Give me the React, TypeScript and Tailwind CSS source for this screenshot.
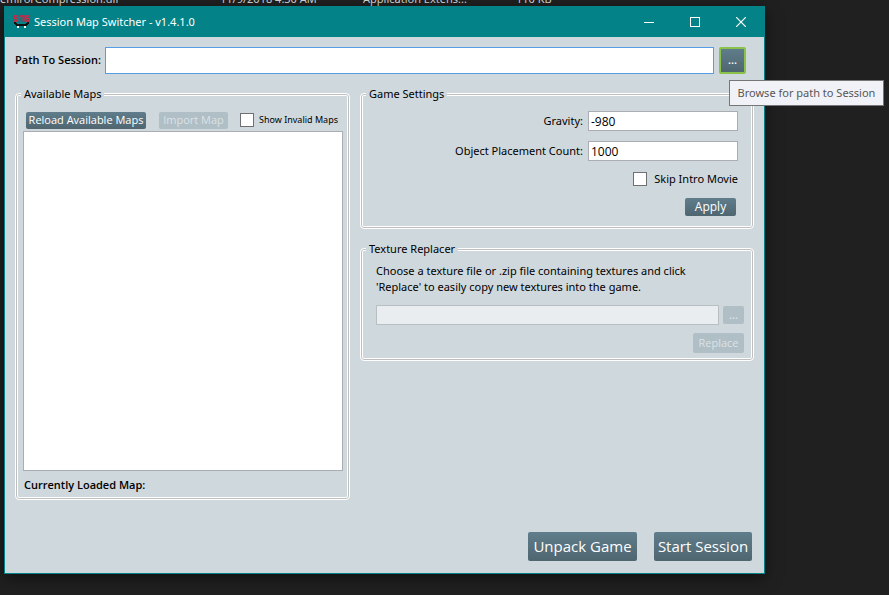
import type { ReactNode } from "react";

const BODY = "font-['Noto_Sans','Segoe_UI',sans-serif]";
const STRONG = "font-['Open_Sans','Segoe_UI',sans-serif] font-semibold";
const BUTTON =
  "shrink-0 rounded-xs bg-linear-to-b from-[#607d8b] to-[#4f6670] font-['Open_Sans','Segoe_UI',sans-serif] text-white whitespace-nowrap disabled:bg-none disabled:bg-[#b0bec5] disabled:text-[#dbe2e6]";
const FIELD = "min-w-0 border border-[#abadb3] bg-white px-[2px] font-['Open_Sans','Segoe_UI',sans-serif] text-[12px] text-black outline-none";
const CHECK = "m-0 h-[14px] w-[14px] shrink-0 appearance-none border border-[#707070] bg-white";

function GroupBox({ title, className, children }: { title: string; className: string; children: ReactNode }) {
  return (
    <fieldset
      className={
        "flex min-w-0 flex-col rounded-[4px] border border-white shadow-[inset_0_0_0_1px_#bfbfbf,inset_0_0_0_2px_#ffffff] " +
        className
      }
    >
      <legend className="float-left -mt-[8px] ml-[5px] h-[16px] self-start bg-[#cfd8dd] px-[3px] leading-[16px]">
        {title}
      </legend>
      {children}
    </fieldset>
  );
}

function Logo() {
  return (
    <svg width="18" height="14" viewBox="0 0 18 14" aria-hidden="true">
      <g fill="none" stroke="#dc1f3f" strokeWidth="1.400">
        <path d="M5 1H1V3.500H4.300V6H.3" />
        <path d="M6.500 6.700V1H11V6.700M8.750 1V6.700" />
        <path d="M16.500 1H12.700V3.500H16V6H12" />
      </g>
      <path d="M1 7h2v1h1v1h9V8h1V7h2v2h-1v1h-1v1H3v-1H2V9H1z" fill="#101010" />
      <path d="M4 11h2v2H4zM11 11h2v2h-2z" fill="#fff" />
    </svg>
  );
}

export default function App() {
  return (
    <div className={"relative flex min-h-screen overflow-hidden bg-[#202020] pt-[6px] pr-[124px] pb-[21px] pl-[4px] text-[11px] text-black " + BODY}>
      <div className="absolute -top-[9px] left-0 flex h-[16px] leading-[16px] whitespace-nowrap text-[#d8d8d8]">
        <span className="w-[220px]">emirorCompression.dll</span>
        <span className="w-[143px]">11/9/2018 4:30 AM</span>
        <span className="w-[153px]">Application Extens...</span>
        <span>110 KB</span>
      </div>

      <main className="relative flex min-w-0 flex-1 flex-col border border-[#038387] bg-[#cfd8dd] shadow-[0_4px_14px_rgba(0,0,0,0.5)]">
        <header className="flex h-[30px] shrink-0 items-center bg-[#038387] pl-[8px] text-white">
          <Logo />
          <h1 className="ml-[3px] flex-1">Session Map Switcher - v1.4.1.0</h1>
          <button type="button" aria-label="Minimize" className="flex h-[30px] w-[46px] items-center justify-center">
            <svg width="10" height="10" stroke="#fff" shapeRendering="crispEdges">
              <path d="M0 5.500H10" />
            </svg>
          </button>
          <button type="button" aria-label="Maximize" className="flex h-[30px] w-[46px] items-center justify-center">
            <svg width="10" height="10" stroke="#fff" fill="none" shapeRendering="crispEdges">
              <path d="M.5.5h9v9h-9z" />
            </svg>
          </button>
          <button type="button" aria-label="Close" className="flex h-[30px] w-[46px] items-center justify-center">
            <svg width="10" height="10" stroke="#fff" strokeWidth="1.200">
              <path d="M0 0L10 10M10 0L0 10" />
            </svg>
          </button>
        </header>

        <div className="flex flex-1 flex-col px-[10px] pt-[10px] pb-[12px]">
          <div className="flex items-center pr-[8px]">
            <label htmlFor="path" className={"w-[90px] shrink-0 whitespace-nowrap " + STRONG}>
              Path To Session:
            </label>
            <input id="path" type="text" className="h-[27px] min-w-0 flex-1 border border-[#569de5] bg-white px-[3px] outline-none" />
            <button type="button" aria-describedby="tip" className={BUTTON + " ml-[5px] h-[27px] w-[27px] rounded-[3px] border-2 border-[#8bc34a] font-semibold"}>
              ...
            </button>
          </div>

          <div className="mt-[19px] flex flex-1 gap-[10px]">
            <GroupBox title="Available Maps" className="mb-[61px] w-[335px] shrink-0">
              <div className="flex min-h-0 flex-1 flex-col pt-[7px] pr-[6px] pl-[7px]">
                <div className="flex h-[22px] items-center pl-[3px]">
                  <button type="button" className={BUTTON + " h-[17px] w-[120px]"}>
                    Reload Available Maps
                  </button>
                  <button type="button" disabled className={BUTTON + " ml-[13px] h-[17px] w-[69px]"}>
                    Import Map
                  </button>
                  <label className="ml-[12px] flex items-center gap-[5px] text-[9px] whitespace-nowrap">
                    <input type="checkbox" className={CHECK} />
                    Show Invalid Maps
                  </label>
                </div>
                <div className="min-h-[100px] flex-1 border border-[#abadb3] bg-white" />
                <p className={"mt-[6px] mb-[6px] pl-[1px] " + STRONG}>Currently Loaded Map:</p>
              </div>
            </GroupBox>

            <div className="flex min-w-0 flex-1 flex-col">
              <GroupBox title="Game Settings" className="h-[136px]">
                <div className="flex flex-col items-end pt-[9px] pr-[15px] pl-[15px]">
                  <label className="flex items-center gap-[5px]">
                    Gravity:
                    <input type="text" defaultValue="-980" className={FIELD + " h-[20px] w-[150px]"} />
                  </label>
                  <label className="mt-[10px] flex items-center gap-[5px]">
                    Object Placement Count:
                    <input type="text" defaultValue="1000" className={FIELD + " h-[20px] w-[150px]"} />
                  </label>
                  <label className="mt-[10px] flex items-center gap-[7px]">
                    <input type="checkbox" className={CHECK} />
                    Skip Intro Movie
                  </label>
                  <button type="button" className={BUTTON + " mt-[10px] mr-[2px] h-[18px] w-[51px] text-[12px]"}>
                    Apply
                  </button>
                </div>
              </GroupBox>

              <GroupBox title="Texture Replacer" className="mt-[19px] h-[113px]">
                <div className="flex flex-col pt-[6px] pr-[9px] pl-[15px]">
                  <p className="leading-[16px]">
                    Choose a texture file or .zip file containing textures and click
                    <br />
                    'Replace' to easily copy new textures into the game.
                  </p>
                  <div className="mt-[10px] flex items-center">
                    <input type="text" disabled aria-label="Texture file" className="h-[20px] min-w-0 flex-1 border border-[#b8bfc3] bg-[#e9edf0]" />
                    <button type="button" disabled aria-label="Browse for texture" className={BUTTON + " ml-[4px] h-[18px] w-[21px] font-semibold"}>
                      ...
                    </button>
                  </div>
                  <button type="button" disabled className={BUTTON + " mt-[8px] h-[20px] w-[51px] self-end"}>
                    Replace
                  </button>
                </div>
              </GroupBox>

              <div className="mt-auto flex justify-end gap-[17px] pr-[2px] text-[15px]">
                <button type="button" className={BUTTON + " h-[29px] w-[109px]"}>
                  Unpack Game
                </button>
                <button type="button" className={BUTTON + " h-[29px] w-[98px]"}>
                  Start Session
                </button>
              </div>
            </div>
          </div>
        </div>
      </main>

      <div
        id="tip"
        role="tooltip"
        className="absolute top-[80px] right-[5px] flex h-[26px] w-[155px] items-center justify-center border border-[#767676] bg-[#f1f2f7] whitespace-nowrap text-[#575757]"
      >
        Browse for path to Session
      </div>
    </div>
  );
}
